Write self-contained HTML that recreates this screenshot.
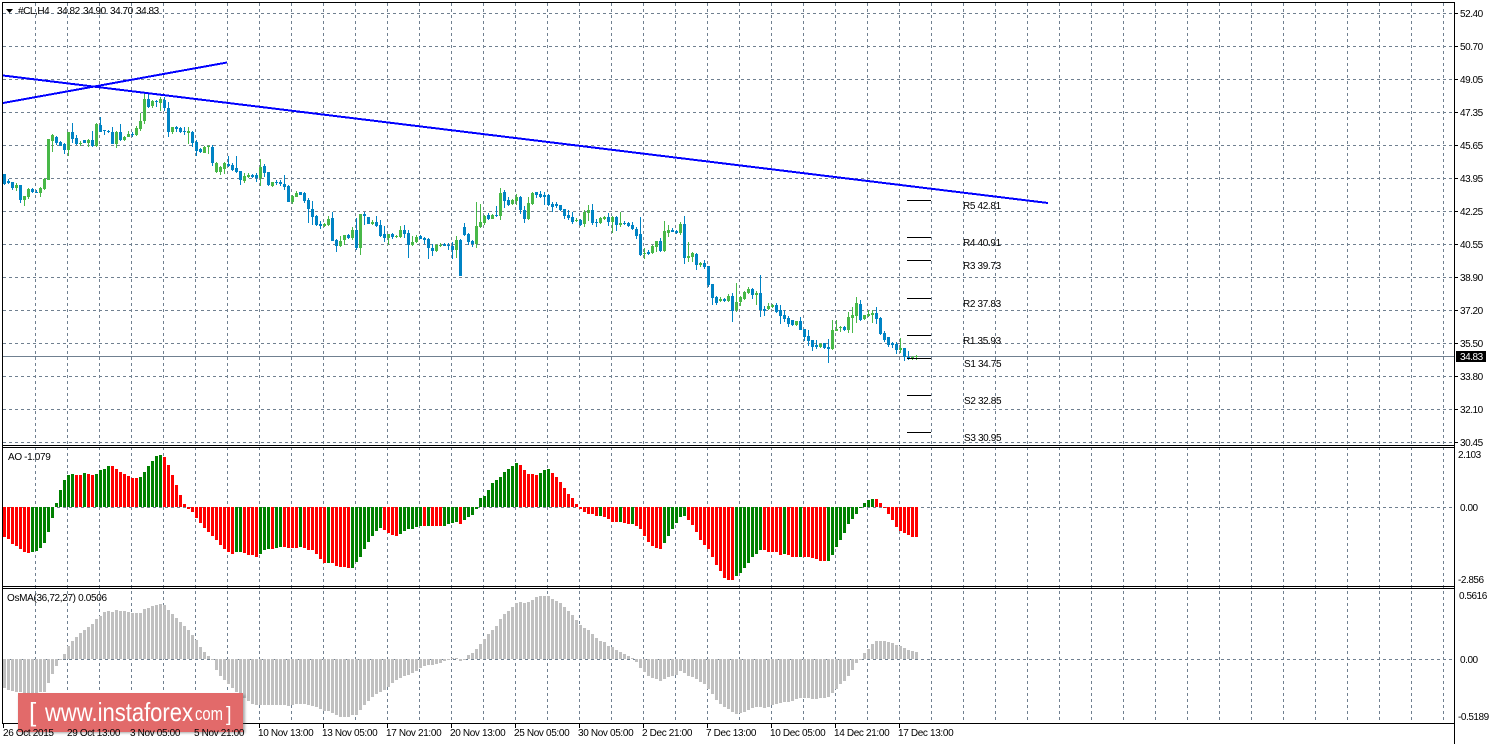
<!DOCTYPE html>
<html><head><meta charset="utf-8"><title>#CL,H4</title>
<style>
html,body{margin:0;padding:0;background:#fff;width:1494px;height:744px;overflow:hidden}
svg{display:block}
text{font-family:"Liberation Sans",sans-serif;font-size:10px;fill:#000}
.a{letter-spacing:-.45px}
.t{letter-spacing:-.35px}
</style></head><body>
<svg width="1494" height="744" viewBox="0 0 1494 744" xmlns="http://www.w3.org/2000/svg">
<defs><filter id="s" x="-5%" y="-15%" width="110%" height="130%"><feGaussianBlur stdDeviation="1.2"/></filter></defs>
<rect width="1494" height="744" fill="#fff"/>
<g shape-rendering="crispEdges" fill="none">
<path stroke="#708090" stroke-dasharray="3 3" d="M3 13.5H1454M3 46.5H1454M3 79.5H1454M3 112.5H1454M3 145.5H1454M3 178.5H1454M3 211.5H1454M3 244.5H1454M3 277.5H1454M3 310.5H1454M3 343.5H1454M3 376.5H1454M3 409.5H1454M3 442.5H1454M3 507.5H1454M3 659.5H1454"/>
<path stroke="#708090" stroke-dasharray="3 3" d="M35.5 3V723M67.5 3V723M99.5 3V723M131.5 3V723M163.5 3V723M195.5 3V723M227.5 3V723M259.5 3V723M291.5 3V723M323.5 3V723M355.5 3V723M387.5 3V723M419.5 3V723M451.5 3V723M483.5 3V723M515.5 3V723M547.5 3V723M579.5 3V723M611.5 3V723M643.5 3V723M675.5 3V723M707.5 3V723M739.5 3V723M771.5 3V723M803.5 3V723M835.5 3V723M867.5 3V723M899.5 3V723M931.5 3V723M963.5 3V723M995.5 3V723M1027.5 3V723M1059.5 3V723M1091.5 3V723M1123.5 3V723M1155.5 3V723M1187.5 3V723M1219.5 3V723M1251.5 3V723M1283.5 3V723M1315.5 3V723M1347.5 3V723M1379.5 3V723M1411.5 3V723M1443.5 3V723"/>
<path stroke="#708090" d="M3 356.5H1454"/>
<!-- candles: green wicks -->
<path stroke="#48b848" d="M16.5 183V191M24.5 196V206M28.5 188V199M40.5 187V197M44.5 178V190M48.5 139V180M52.5 134V152M68.5 132V156M80.5 141V146M88.5 139V147M96.5 123V147M116.5 131V148M124.5 136V141M128.5 131V137M136.5 126V136M140.5 113V131M144.5 93V124M152.5 100V108M160.5 97V111M172.5 127V134M188.5 127V144M204.5 146V153M208.5 145V154M216.5 162V173M220.5 166V175M224.5 162V174M244.5 173V183M248.5 173V178M260.5 159V186M272.5 182V187M292.5 195V204M296.5 191V197M324.5 223V227M328.5 216V226M340.5 236V247M344.5 235V245M352.5 227V240M360.5 214V255M372.5 220V225M388.5 234V245M396.5 235V238M400.5 226V238M412.5 236V246M416.5 235V243M436.5 244V252M440.5 243V247M456.5 236V258M476.5 202V248M480.5 204V228M484.5 215V225M492.5 214V219M500.5 188V220M512.5 199V205M516.5 194V205M528.5 197V220M532.5 192V205M576.5 218V222M584.5 210V227M588.5 205V221M600.5 217V224M604.5 216V220M612.5 216V233M620.5 212V227M644.5 248V259M652.5 245V254M656.5 241V252M664.5 221V252M668.5 225V237M680.5 222V235M688.5 242V262M692.5 252V262M700.5 262V267M720.5 297V302M728.5 294V302M736.5 283V312M740.5 296V306M744.5 291V300M748.5 287V294M756.5 291V305M768.5 303V310M772.5 304V308M796.5 321V326M820.5 343V348M832.5 320V350M836.5 320V331M840.5 326V332M848.5 312V333M852.5 307V333M856.5 297V323M864.5 315V320M868.5 310V317M872.5 310V323M900.5 338V353M912.5 356V360M916.5 355V360"/>
<!-- candles: green bodies -->
<path stroke="#48b848" stroke-width="3" d="M16.5 185V188M24.5 196V200M28.5 189V197M40.5 188V193M44.5 179V189M48.5 139V180M52.5 135V141M68.5 132V150M80.5 143V144M88.5 140V143M96.5 124V146M116.5 132V144M124.5 137V140M128.5 134V137M136.5 128V135M140.5 121V129M144.5 99V121M152.5 101V106M160.5 99V103M172.5 127V132M188.5 131V133M204.5 147V153M208.5 146V147M216.5 163V172M220.5 167V172M224.5 163V169M244.5 176V181M248.5 175V177M260.5 167V178M272.5 182V186M292.5 196V202M296.5 193V197M324.5 224V226M328.5 219V225M340.5 241V246M344.5 235V240M352.5 230V238M360.5 214V248M372.5 222V224M388.5 234V238M396.5 236V237M400.5 230V237M412.5 242V245M416.5 237V242M436.5 245V251M440.5 245V246M456.5 240V250M476.5 226V244M480.5 222V227M484.5 216V223M492.5 215V219M500.5 193V216M512.5 200V204M516.5 197V201M528.5 203V219M532.5 193V204M576.5 220V221M584.5 212V224M588.5 210V213M600.5 218V223M604.5 217V219M612.5 217V222M620.5 223V225M644.5 253V254M652.5 246V253M656.5 241V247M664.5 231V251M668.5 230V233M680.5 224V233M688.5 256V258M692.5 253V257M700.5 263V265M720.5 299V301M728.5 296V301M736.5 302V310M740.5 297V302M744.5 292V299M748.5 289V293M756.5 293V295M768.5 306V309M772.5 305V307M796.5 321V325M820.5 344V347M832.5 330V349M836.5 329V331M840.5 327V328M848.5 317V330M852.5 315V318M856.5 303V316M864.5 315V319M868.5 314V316M872.5 313V315M900.5 348V350M912.5 357V358M916.5 356V357"/>
<!-- candles: blue wicks -->
<path stroke="#0083c4" d="M4.5 174V185M8.5 179V184M12.5 182V190M20.5 185V203M32.5 188V193M36.5 190V193M56.5 136V145M60.5 141V146M64.5 143V154M72.5 123V143M76.5 135V145M84.5 140V143M92.5 131V147M100.5 117V132M104.5 130V135M108.5 130V133M112.5 127V144M120.5 124V141M132.5 132V137M148.5 93V108M156.5 100V107M164.5 97V111M168.5 102V137M176.5 126V132M180.5 127V133M184.5 127V135M192.5 131V147M196.5 140V156M200.5 148V153M212.5 145V166M228.5 156V167M232.5 163V171M236.5 156V173M240.5 171V185M252.5 174V178M256.5 173V182M264.5 164V177M268.5 172V186M276.5 180V185M280.5 180V186M284.5 175V190M288.5 185V202M300.5 192V195M304.5 192V203M308.5 198V223M312.5 201V225M316.5 215V226M320.5 221V229M332.5 212V241M336.5 239V252M348.5 234V239M356.5 218V250M364.5 212V225M368.5 217V224M376.5 216V227M380.5 220V237M384.5 226V242M392.5 233V239M404.5 225V238M408.5 230V258M420.5 235V239M424.5 237V244M428.5 238V259M432.5 244V256M444.5 243V246M448.5 243V250M452.5 242V259M460.5 239V276M464.5 223V236M468.5 233V245M472.5 240V247M488.5 213V220M496.5 206V217M504.5 190V208M508.5 197V206M520.5 196V214M524.5 206V223M536.5 192V198M540.5 191V198M544.5 192V205M548.5 194V206M552.5 202V212M556.5 202V208M560.5 205V211M564.5 209V219M568.5 210V220M572.5 212V224M580.5 219V226M592.5 204V225M596.5 219V227M608.5 213V226M616.5 216V231M624.5 221V225M628.5 222V227M632.5 222V230M636.5 227V239M640.5 217V256M648.5 250V255M660.5 238V252M672.5 228V232M676.5 230V234M684.5 216V264M696.5 253V270M704.5 260V269M708.5 266V287M712.5 284V305M716.5 296V305M724.5 298V302M732.5 293V322M752.5 288V299M760.5 275V317M764.5 306V316M776.5 303V313M780.5 305V324M784.5 310V322M788.5 316V327M792.5 320V326M800.5 317V330M804.5 329V341M808.5 330V346M812.5 340V351M816.5 340V349M824.5 343V349M828.5 339V363M844.5 326V331M860.5 300V321M876.5 307V324M880.5 317V335M884.5 331V342M888.5 337V347M892.5 342V348M896.5 342V354M904.5 348V361M908.5 351V360"/>
<!-- candles: blue bodies -->
<path stroke="#0083c4" stroke-width="3" d="M4.5 174V184M8.5 181V183M12.5 182V188M20.5 185V200M32.5 189V192M36.5 192V193M56.5 137V143M60.5 142V146M64.5 144V150M72.5 132V139M76.5 138V144M84.5 140V143M92.5 140V146M100.5 125V132M104.5 130V131M108.5 131V132M112.5 132V144M120.5 132V140M132.5 134V135M148.5 99V107M156.5 101V102M164.5 100V108M168.5 108V132M176.5 127V129M180.5 128V132M184.5 131V132M192.5 132V143M196.5 142V151M200.5 149V152M212.5 147V163M228.5 164V166M232.5 165V170M236.5 168V172M240.5 171V180M252.5 175V177M256.5 175V178M264.5 166V173M268.5 172V185M276.5 182V183M280.5 182V184M284.5 184V187M288.5 186V202M300.5 192V195M304.5 193V201M308.5 200V209M312.5 209V217M316.5 216V225M320.5 224V226M332.5 218V241M336.5 240V246M348.5 235V238M356.5 230V248M364.5 214V216M368.5 217V224M376.5 222V226M380.5 225V236M384.5 234V238M392.5 234V237M404.5 230V234M408.5 233V245M420.5 236V239M424.5 238V240M428.5 239V248M432.5 248V251M444.5 244V246M448.5 245V246M452.5 246V250M460.5 240V276M464.5 227V235M468.5 234V242M472.5 241V244M488.5 215V219M496.5 215V216M504.5 192V201M508.5 200V205M520.5 197V210M524.5 210V219M536.5 192V195M540.5 194V197M544.5 195V197M548.5 195V205M552.5 204V207M556.5 204V206M560.5 205V210M564.5 209V216M568.5 215V218M572.5 217V222M580.5 220V225M592.5 210V223M596.5 222V223M608.5 217V222M616.5 217V225M624.5 223V224M628.5 223V226M632.5 225V229M636.5 229V236M640.5 234V255M648.5 252V254M660.5 241V251M672.5 230V232M676.5 231V233M684.5 224V258M696.5 254V265M704.5 263V267M708.5 266V285M712.5 284V298M716.5 297V303M724.5 299V301M732.5 296V311M752.5 289V295M760.5 293V310M764.5 309V311M776.5 305V312M780.5 310V316M784.5 315V319M788.5 318V324M792.5 320V325M800.5 321V330M804.5 329V337M808.5 336V341M812.5 340V347M816.5 345V347M824.5 343V348M828.5 347V349M844.5 327V330M860.5 304V320M876.5 313V319M880.5 318V334M884.5 333V340M888.5 337V345M892.5 343V345M896.5 344V350M904.5 348V357M908.5 357V358"/>
<!-- AO green -->
<path stroke="#008000" stroke-width="3" d="M32.5 507V552M36.5 507V551M40.5 507V548M44.5 507V543M48.5 507V532M52.5 507V518M56.5 507V503M60.5 507V490M64.5 507V480M68.5 507V475M72.5 507V474M84.5 507V473M96.5 507V474M100.5 507V470M104.5 507V469M108.5 507V466M140.5 507V477M144.5 507V472M148.5 507V466M152.5 507V461M156.5 507V456M160.5 507V455M236.5 507V552M240.5 507V552M260.5 507V554M264.5 507V550M268.5 507V549M276.5 507V548M280.5 507V547M300.5 507V547M328.5 507V563M352.5 507V568M356.5 507V562M360.5 507V557M364.5 507V549M368.5 507V542M372.5 507V536M376.5 507V531M380.5 507V528M400.5 507V534M404.5 507V531M408.5 507V529M412.5 507V529M416.5 507V527M420.5 507V526M428.5 507V526M444.5 507V526M448.5 507V524M452.5 507V523M456.5 507V522M464.5 507V520M468.5 507V517M472.5 507V515M476.5 507V509M480.5 507V498M484.5 507V496M488.5 507V490M492.5 507V483M496.5 507V480M500.5 507V477M504.5 507V472M508.5 507V469M512.5 507V466M516.5 507V463M540.5 507V473M544.5 507V470M548.5 507V469M600.5 507V516M620.5 507V522M632.5 507V524M664.5 507V543M668.5 507V536M672.5 507V529M676.5 507V523M680.5 507V517M684.5 507V516M736.5 507V576M740.5 507V573M744.5 507V568M748.5 507V563M752.5 507V557M756.5 507V554M760.5 507V550M784.5 507V554M800.5 507V557M828.5 507V561M832.5 507V555M836.5 507V547M840.5 507V540M844.5 507V533M848.5 507V524M852.5 507V519M856.5 507V514M860.5 507V508M864.5 507V503M868.5 507V500M872.5 507V499"/>
<!-- AO red -->
<path stroke="#ff0000" stroke-width="3" d="M4.5 507V537M8.5 507V539M12.5 507V544M16.5 507V546M20.5 507V549M24.5 507V552M28.5 507V553M76.5 507V475M80.5 507V475M88.5 507V474M92.5 507V475M112.5 507V466M116.5 507V469M120.5 507V472M124.5 507V474M128.5 507V476M132.5 507V478M136.5 507V478M164.5 507V457M168.5 507V465M172.5 507V475M176.5 507V485M180.5 507V495M184.5 507V504M188.5 507V509M192.5 507V512M196.5 507V518M200.5 507V523M204.5 507V528M208.5 507V532M212.5 507V536M216.5 507V540M220.5 507V545M224.5 507V549M228.5 507V552M232.5 507V554M244.5 507V553M248.5 507V555M252.5 507V555M256.5 507V557M272.5 507V549M284.5 507V547M288.5 507V548M292.5 507V548M296.5 507V548M304.5 507V548M308.5 507V550M312.5 507V550M316.5 507V554M320.5 507V559M324.5 507V563M332.5 507V563M336.5 507V566M340.5 507V567M344.5 507V567M348.5 507V568M384.5 507V530M388.5 507V533M392.5 507V535M396.5 507V536M424.5 507V526M432.5 507V526M436.5 507V526M440.5 507V526M460.5 507V524M520.5 507V465M524.5 507V470M528.5 507V474M532.5 507V474M536.5 507V475M552.5 507V473M556.5 507V477M560.5 507V482M564.5 507V488M568.5 507V494M572.5 507V498M576.5 507V504M580.5 507V509M584.5 507V512M588.5 507V514M592.5 507V514M596.5 507V516M604.5 507V517M608.5 507V519M612.5 507V522M616.5 507V522M624.5 507V523M628.5 507V524M636.5 507V526M640.5 507V529M644.5 507V536M648.5 507V542M652.5 507V546M656.5 507V548M660.5 507V549M688.5 507V520M692.5 507V525M696.5 507V532M700.5 507V540M704.5 507V545M708.5 507V549M712.5 507V557M716.5 507V565M720.5 507V571M724.5 507V578M728.5 507V580M732.5 507V580M764.5 507V550M768.5 507V552M772.5 507V552M776.5 507V552M780.5 507V555M788.5 507V555M792.5 507V557M796.5 507V557M804.5 507V557M808.5 507V557M812.5 507V558M816.5 507V559M820.5 507V561M824.5 507V561M876.5 507V499M880.5 507V503M884.5 507V508M888.5 507V514M892.5 507V520M896.5 507V527M900.5 507V531M904.5 507V533M908.5 507V535M912.5 507V537M916.5 507V537"/>
<!-- OsMA -->
<path stroke="#c0c0c0" stroke-width="3" d="M4.5 659V688M8.5 659V690M12.5 659V691M16.5 659V692M20.5 659V692M24.5 659V693M28.5 659V693M32.5 659V693M36.5 659V693M40.5 659V692M44.5 659V692M48.5 659V683M52.5 659V674M56.5 659V666M60.5 659V660M64.5 659V654M68.5 659V646M72.5 659V641M76.5 659V637M80.5 659V633M84.5 659V630M88.5 659V627M92.5 659V624M96.5 659V619M100.5 659V616M104.5 659V612M108.5 659V611M112.5 659V612M116.5 659V610M120.5 659V611M124.5 659V611M128.5 659V612M132.5 659V613M136.5 659V613M140.5 659V613M144.5 659V609M148.5 659V608M152.5 659V606M156.5 659V605M160.5 659V604M164.5 659V605M168.5 659V610M172.5 659V614M176.5 659V618M180.5 659V622M184.5 659V626M188.5 659V630M192.5 659V635M196.5 659V640M200.5 659V647M204.5 659V652M208.5 659V656M212.5 659V660M216.5 659V670M220.5 659V676M224.5 659V680M228.5 659V684M232.5 659V688M236.5 659V692M240.5 659V695M244.5 659V698M248.5 659V701M252.5 659V704M256.5 659V705M260.5 659V705M264.5 659V705M268.5 659V705M272.5 659V705M276.5 659V705M280.5 659V705M284.5 659V705M288.5 659V706M292.5 659V705M296.5 659V704M300.5 659V704M304.5 659V704M308.5 659V705M312.5 659V706M316.5 659V707M320.5 659V709M324.5 659V711M328.5 659V711M332.5 659V713M336.5 659V715M340.5 659V717M344.5 659V717M348.5 659V717M352.5 659V715M356.5 659V715M360.5 659V710M364.5 659V705M368.5 659V701M372.5 659V697M376.5 659V694M380.5 659V692M384.5 659V690M388.5 659V687M392.5 659V683M396.5 659V680M400.5 659V678M404.5 659V676M408.5 659V675M412.5 659V673M416.5 659V671M420.5 659V668M424.5 659V666M428.5 659V665M432.5 659V665M436.5 659V664M440.5 659V663M444.5 659V661M448.5 659V660M452.5 659V658M456.5 659V658M460.5 659V661M464.5 659V660M468.5 659V655M472.5 659V653M476.5 659V649M480.5 659V644M484.5 659V639M488.5 659V634M492.5 659V630M496.5 659V626M500.5 659V619M504.5 659V614M508.5 659V611M512.5 659V607M516.5 659V603M520.5 659V602M524.5 659V603M528.5 659V602M532.5 659V600M536.5 659V597M540.5 659V596M544.5 659V596M548.5 659V596M552.5 659V599M556.5 659V601M560.5 659V603M564.5 659V607M568.5 659V611M572.5 659V615M576.5 659V620M580.5 659V625M584.5 659V628M588.5 659V630M592.5 659V634M596.5 659V638M600.5 659V641M604.5 659V642M608.5 659V646M612.5 659V647M616.5 659V650M620.5 659V652M624.5 659V654M628.5 659V656M632.5 659V658M636.5 659V662M640.5 659V668M644.5 659V672M648.5 659V676M652.5 659V678M656.5 659V679M660.5 659V681M664.5 659V679M668.5 659V677M672.5 659V676M676.5 659V675M680.5 659V671M684.5 659V673M688.5 659V676M692.5 659V677M696.5 659V679M700.5 659V682M704.5 659V684M708.5 659V689M712.5 659V694M716.5 659V700M720.5 659V704M724.5 659V707M728.5 659V709M732.5 659V712M736.5 659V714M740.5 659V713M744.5 659V712M748.5 659V710M752.5 659V708M756.5 659V707M760.5 659V707M764.5 659V708M768.5 659V707M772.5 659V705M776.5 659V704M780.5 659V703M784.5 659V702M788.5 659V702M792.5 659V701M796.5 659V699M800.5 659V698M804.5 659V698M808.5 659V698M812.5 659V699M816.5 659V699M820.5 659V698M824.5 659V698M828.5 659V697M832.5 659V693M836.5 659V689M840.5 659V684M844.5 659V681M848.5 659V676M852.5 659V670M856.5 659V663M860.5 659V660M864.5 659V653M868.5 659V649M872.5 659V644M876.5 659V641M880.5 659V641M884.5 659V641M888.5 659V642M892.5 659V643M896.5 659V645M900.5 659V646M904.5 659V648M908.5 659V650M912.5 659V651M916.5 659V652"/>
<!-- pivots -->
<path stroke="#000" d="M907 200.5H931M907 237.5H931M907 260.5H931M907 298.5H931M907 335.5H931M907 358.5H931M907 395.5H931M907 432.5H931"/>
<!-- frame -->
<path stroke="#000" d="M2.5 2V723.5M1454.5 2V744M2 2.5H1455M2 445.5H1455M2 447.5H1455M2 586.5H1455M2 588.5H1455M2 723.5H1455"/>
<path stroke="#000" d="M1455 13.5H1458M1455 46.5H1458M1455 79.5H1458M1455 112.5H1458M1455 145.5H1458M1455 178.5H1458M1455 211.5H1458M1455 244.5H1458M1455 277.5H1458M1455 310.5H1458M1455 343.5H1458M1455 376.5H1458M1455 409.5H1458M1455 442.5H1458"/>
<path stroke="#000" d="M3.5 724V728M67.5 724V728M131.5 724V728M195.5 724V728M259.5 724V728M323.5 724V728M387.5 724V728M451.5 724V728M515.5 724V728M579.5 724V728M643.5 724V728M707.5 724V728M771.5 724V728M835.5 724V728M899.5 724V728"/>
<!-- trend lines -->
<path fill="none" stroke="#0000ff" stroke-width="2" d="M3 75.5L1048 203M3 103L227 62.5"/>
</g>
<!-- price tag -->
<rect x="1456" y="351" width="30" height="11" fill="#000"/>
<text x="1460" y="360" class="a" style="fill:#fff">34.83</text>
<!-- title -->
<polygon points="6,9 13,9 9.5,13" fill="#000"/>
<g class="a">
<text x="18" y="14">#CL,H4</text><text x="57" y="14">34.82</text><text x="83" y="14">34.90</text><text x="110" y="14">34.70</text><text x="136" y="14">34.83</text>
</g>
<text x="8" y="460" class="t">AO -1.079</text>
<text x="7" y="601" textLength="100">OsMA(36,72,27) 0.0506</text>
<!-- right axis -->
<g class="a">
<text x="1460" y="17">52.40</text><text x="1460" y="50">50.70</text><text x="1460" y="83">49.05</text><text x="1460" y="116">47.35</text><text x="1460" y="149">45.65</text><text x="1460" y="182">43.95</text><text x="1460" y="215">42.25</text><text x="1460" y="248">40.55</text><text x="1460" y="281">38.90</text><text x="1460" y="314">37.20</text><text x="1460" y="347">35.50</text><text x="1460" y="380">33.80</text><text x="1460" y="413">32.10</text><text x="1460" y="446">30.45</text>
<text x="1458" y="458">2.103</text><text x="1460" y="511">0.00</text><text x="1458" y="583">-2.856</text>
<text x="1459" y="599">0.5616</text><text x="1460" y="663">0.00</text><text x="1458" y="720">-0.5189</text>
</g>
<!-- pivot labels -->
<g class="t">
<text x="963" y="209">R5 42.81</text><text x="963" y="246">R4 40.91</text><text x="963" y="269">R3 39.73</text><text x="963" y="307">R2 37.83</text><text x="963" y="344">R1 35.93</text><text x="964" y="367">S1 34.75</text><text x="964" y="404">S2 32.85</text><text x="964" y="441">S3 30.95</text>
</g>
<!-- watermark -->
<rect x="19" y="695" width="226" height="38" fill="#555" opacity=".5" filter="url(#s)"/>
<rect x="18" y="693" width="225" height="39" fill="#e26a6a"/>
<text x="29" y="721" style="font-size:26px;fill:#fff">[</text>
<text x="45" y="721" style="font-size:26px;fill:#fff" textLength="148" lengthAdjust="spacingAndGlyphs">www.instaforex</text>
<text x="195" y="720" style="font-size:18px;fill:#fff" textLength="28" lengthAdjust="spacingAndGlyphs">com</text>
<text x="226" y="721" style="font-size:20px;fill:#fff">]</text>
<!-- time axis -->
<g class="t">
<text x="3" y="736">26 Oct 2015</text><text x="67" y="736">29 Oct 13:00</text><text x="130" y="736">3 Nov 05:00</text><text x="194" y="736">5 Nov 21:00</text><text x="258" y="736">10 Nov 13:00</text><text x="322" y="736">13 Nov 05:00</text><text x="386" y="736">17 Nov 21:00</text><text x="450" y="736">20 Nov 13:00</text><text x="514" y="736">25 Nov 05:00</text><text x="578" y="736">30 Nov 05:00</text><text x="642" y="736">2 Dec 21:00</text><text x="706" y="736">7 Dec 13:00</text><text x="770" y="736">10 Dec 05:00</text><text x="834" y="736">14 Dec 21:00</text><text x="898" y="736">17 Dec 13:00</text>
</g>
</svg>
</body></html>
